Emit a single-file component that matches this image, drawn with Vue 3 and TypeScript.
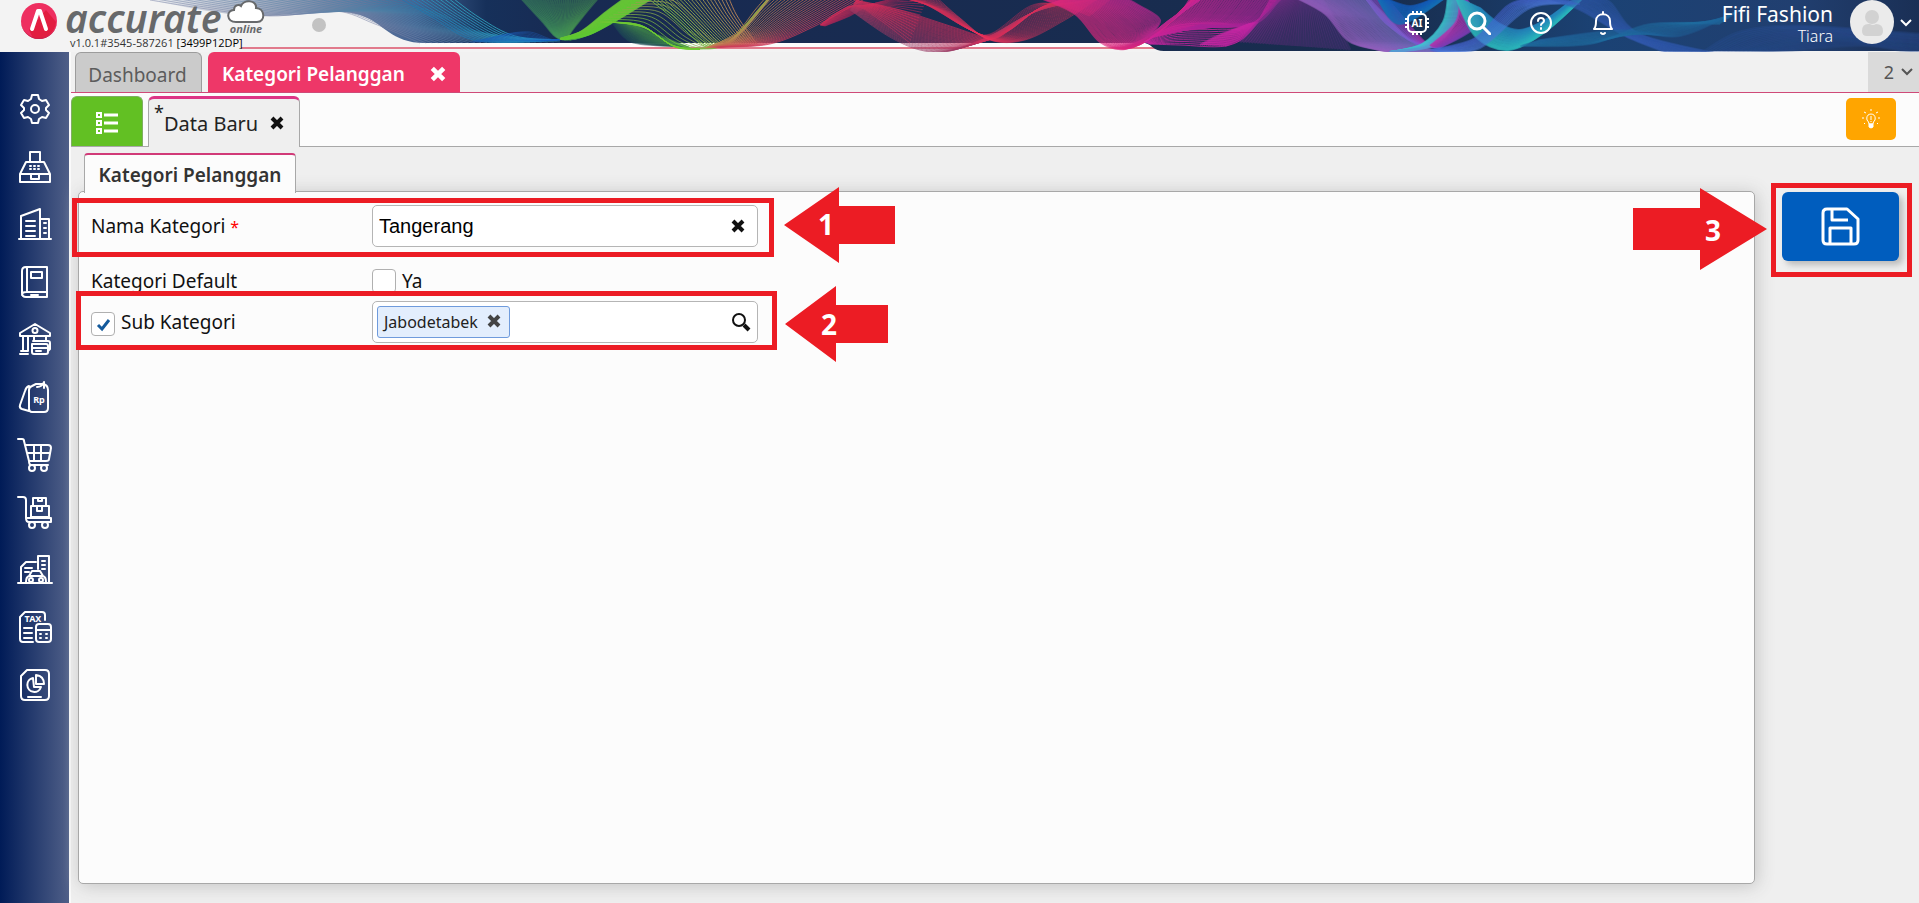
<script setup lang="ts">
import { ref } from 'vue'

type Point = [number, number]

interface Ribbon {
  from: Point[]
  to: Point[]
  lines: number
  start: [number, number, number]
  end: [number, number, number]
  opacity: number
  width: number
}

interface Stroke {
  d: string
  color: string
  opacity: number
  width: number
}

const ribbons: Ribbon[] = [
  { from: [[150, 0], [200, 8], [270, 16], [335, 11], [375, 24], [420, 43]], to: [[330, -16], [370, -8], [400, 2], [440, 14], [480, 32], [560, 42]], lines: 24, start: [122, 132, 166], end: [40, 130, 170], opacity: 0.55, width: 1 },
  { from: [[396, -4], [430, 16], [473, 40], [530, 42]], to: [[450, -4], [480, 18], [515, 36], [560, 40]], lines: 12, start: [30, 120, 175], end: [50, 175, 200], opacity: 0.8, width: 1 },
  { from: [[505, 34], [530, 32], [556, 40], [580, 34]], to: [[470, 42], [500, 41], [540, 41], [575, 38]], lines: 12, start: [30, 95, 190], end: [22, 90, 190], opacity: 0.4, width: 1 },
  { from: [[519, -4], [541, 20], [561, 39], [590, 30], [615, 10], [640, -6]], to: [[600, -4], [585, 14], [568, 38], [590, 34], [620, 18], [656, -4]], lines: 34, start: [65, 150, 90], end: [70, 150, 80], opacity: 0.5, width: 2 },
  { from: [[560, 39], [582, 31], [606, 12], [628, -4]], to: [[566, 39], [590, 34], [620, 18], [655, -4]], lines: 22, start: [104, 197, 55], end: [94, 200, 50], opacity: 0.8, width: 2 },
  { from: [[612, 22], [632, 42], [680, 46]], to: [[630, 23], [655, 34], [690, 48]], lines: 18, start: [30, 75, 85], end: [70, 150, 70], opacity: 0.5, width: 2 },
  { from: [[600, 22], [640, 25], [672, 45], [700, 49], [728, 42], [770, -4]], to: [[640, 0], [674, 1], [704, 28], [724, 45], [744, 30], [772, -4]], lines: 10, start: [111, 192, 60], end: [170, 145, 90], opacity: 0.75, width: 1 },
  { from: [[645, -4], [670, 16], [698, 42], [710, 48]], to: [[728, -4], [736, 14], [748, 32], [757, 44]], lines: 22, start: [115, 188, 64], end: [188, 133, 87], opacity: 0.9, width: 1 },
  { from: [[600, 22], [640, 25], [672, 45], [700, 49]], to: [[615, 22], [645, 28], [675, 47], [700, 49]], lines: 8, start: [110, 200, 50], end: [110, 200, 50], opacity: 0.8, width: 1 },
  { from: [[705, 48], [735, 34], [755, 10], [767, -4]], to: [[720, 47], [770, 44], [815, 26], [870, -4]], lines: 28, start: [190, 135, 80], end: [205, 60, 90], opacity: 0.75, width: 1 },
  { from: [[820, 25], [838, 12], [856, 6], [880, 20], [910, 43]], to: [[825, 26], [850, 16], [870, 5], [900, -3], [930, -10]], lines: 20, start: [225, 45, 90], end: [160, 38, 85], opacity: 0.6, width: 1 },
  { from: [[850, 10], [888, 36], [920, 50], [950, 51], [990, 36], [1040, 10], [1110, -4]], to: [[856, 0], [900, 10], [950, 26], [990, 38], [1010, 30], [1040, 8], [1075, -4]], lines: 34, start: [150, 58, 100], end: [225, 45, 90], opacity: 0.6, width: 1 },
  { from: [[880, -4], [920, 2], [965, 27], [990, 34], [1030, 6], [1058, 5], [1090, 16]], to: [[935, -4], [960, 18], [990, 40], [1025, 40], [1065, 20], [1100, -2], [1120, -8]], lines: 30, start: [200, 45, 88], end: [235, 50, 90], opacity: 0.45, width: 1 },
  { from: [[1035, -4], [1075, 14], [1100, 42], [1125, 49], [1155, 35], [1196, -4]], to: [[1110, -10], [1140, 6], [1160, 20], [1150, 36], [1170, 20], [1205, -4]], lines: 34, start: [220, 40, 125], end: [180, 40, 140], opacity: 0.65, width: 2 },
  { from: [[1144, 42], [1175, 26], [1215, 23], [1250, 24], [1285, -4]], to: [[1150, 44], [1180, 45], [1225, 46], [1250, 32], [1272, -4]], lines: 12, start: [210, 40, 160], end: [200, 36, 160], opacity: 0.8, width: 1 },
  { from: [[1192, -4], [1175, 20], [1150, 38]], to: [[1282, -4], [1254, 24], [1200, 25]], lines: 36, start: [205, 35, 150], end: [165, 35, 150], opacity: 0.7, width: 2 },
  { from: [[1200, 45], [1222, 34], [1250, 24]], to: [[1225, 46], [1243, 38], [1258, 22]], lines: 14, start: [200, 40, 165], end: [190, 35, 160], opacity: 0.6, width: 2 },
  { from: [[1282, -4], [1260, 20], [1240, 42]], to: [[1320, -4], [1335, 20], [1350, 50]], lines: 40, start: [130, 45, 140], end: [90, 50, 130], opacity: 0.35, width: 3 },
  { from: [[1292, -4], [1325, 14], [1350, 42], [1390, 52]], to: [[1366, -4], [1390, 20], [1412, 42], [1440, 52]], lines: 44, start: [150, 95, 190], end: [112, 105, 185], opacity: 0.55, width: 2 },
  { from: [[1364, -4], [1385, 22], [1415, 43], [1440, 48]], to: [[1385, -4], [1400, 14], [1425, 42], [1440, 46]], lines: 10, start: [130, 95, 220], end: [170, 50, 180], opacity: 0.6, width: 2 },
  { from: [[1380, -4], [1410, 6], [1440, -4]], to: [[1376, -4], [1400, 24], [1448, -4]], lines: 20, start: [20, 90, 185], end: [20, 110, 180], opacity: 0.6, width: 2 },
  { from: [[1448, -4], [1443, 22], [1422, 44], [1390, 52]], to: [[1460, -4], [1456, 22], [1432, 46], [1390, 52]], lines: 14, start: [60, 205, 210], end: [90, 150, 210], opacity: 0.6, width: 2 },
  { from: [[1460, -4], [1456, 22], [1430, 46]], to: [[1464, -4], [1478, 24], [1440, 48]], lines: 16, start: [180, 50, 170], end: [125, 60, 180], opacity: 0.65, width: 2 },
  { from: [[1455, -4], [1475, 36], [1508, 50], [1545, 32], [1585, -4]], to: [[1480, 8], [1500, 24], [1520, 30], [1545, 20], [1570, 2]], lines: 32, start: [45, 190, 190], end: [35, 130, 185], opacity: 0.6, width: 2 },
  { from: [[1430, 50], [1475, 38], [1510, 4], [1550, -4]], to: [[1440, 52], [1480, 48], [1530, 8], [1580, 4]], lines: 12, start: [70, 100, 210], end: [75, 120, 215], opacity: 0.45, width: 2 },
  { from: [[1540, -4], [1580, 10], [1625, 36], [1670, 54]], to: [[1590, -4], [1610, 2], [1640, 34], [1720, 54]], lines: 22, start: [55, 95, 185], end: [45, 85, 165], opacity: 0.35, width: 2 },
  { from: [[1520, 46], [1590, 44], [1650, 24], [1720, 24]], to: [[1540, 40], [1620, 30], [1680, 36], [1740, 10]], lines: 20, start: [32, 115, 165], end: [32, 100, 155], opacity: 0.3, width: 2 },
  { from: [[1700, 54], [1740, 32], [1800, 26], [1919, 34]], to: [[1760, 54], [1820, 48], [1870, 46], [1919, 54]], lines: 20, start: [45, 85, 165], end: [40, 75, 140], opacity: 0.2, width: 3 },
]

function smooth(points: Point[]): string {
  let d = `M${points[0][0].toFixed(1)} ${points[0][1].toFixed(1)}`
  for (let i = 0; i < points.length - 1; i++) {
    const p0 = points[Math.max(0, i - 1)]
    const p1 = points[i]
    const p2 = points[i + 1]
    const p3 = points[Math.min(points.length - 1, i + 2)]
    const c = [
      p1[0] + (p2[0] - p0[0]) / 6, p1[1] + (p2[1] - p0[1]) / 6,
      p2[0] - (p3[0] - p1[0]) / 6, p2[1] - (p3[1] - p1[1]) / 6,
      p2[0], p2[1],
    ].map(v => v.toFixed(1))
    d += `C${c.join(' ')}`
  }
  return d
}

const strokes: Stroke[] = ribbons.flatMap(r =>
  Array.from({ length: r.lines }, (_, i) => {
    const t = i / (r.lines - 1)
    const mix = (a: number, b: number) => a + (b - a) * t
    const points = r.from.map((p, k): Point => [mix(p[0], r.to[k][0]), mix(p[1], r.to[k][1])])
    const rgb = r.start.map((c, k) => Math.round(mix(c, r.end[k])))
    return { d: smooth(points), color: `rgb(${rgb.join(',')})`, opacity: r.opacity, width: r.width }
  }),
)

const menu = [
  { name: 'Pengaturan', d: 'M13 2h6l1 4 3 2 4-1 3 5-3 3v2l3 3-3 5-4-1-3 2-1 4h-6l-1-4-3-2-4 1-3-5 3-3v-2l-3-3 3-5 4 1 3-2zM16 12a4 4 0 1 0 0 8a4 4 0 1 0 0-8' },
  { name: 'Kasir', d: 'M11 11V1h10v10M7 11h18l6 12H1zM1 23h30v8H1zM12 24v4h8v-4M11 15h1M15 15h1M19 15h1M11 18h1M15 18h1M19 18h1' },
  { name: 'Perusahaan', d: 'M0 31h32M2 31V8l19-7v30M21 11h9v20M7 13h9M7 18h9M7 23h9M7 28h9M25 15h2M25 20h2M25 25h2' },
  { name: 'Buku Besar', d: 'M7 1h21v30H7q-4 0-4-4V5q0-4 4-4M8 1v25M7 26h21M7 26q-4 0-4 3M12 6h11v6H12zM12 29h7' },
  { name: 'Kas & Bank', d: 'M1 10L16 1l15 9v3H1zM16 5a2 2 0 1 0 0 5a2 2 0 1 0 0-5M4 14v14M9 14v14M1 31h8M2 28h7M15 14v4M27 14v3M14 18h15q2 0 2 2v6l-2 2M13 21h14q2 0 2 2v6q0 2-2 2H15q-2 0-2-2zM13 25h16M17 28h5' },
  { name: 'Penjualan', d: 'M10 9q0-3 3-4l4-2h7q5 1 5 6v18q0 4-4 4H13q-3 0-3-4zM10 5q-3 1-4 5L1 24q-1 3 2 4l7 2M18 6q5 0 7-5M25 1v6', label: 'Rp', lx: 20, ly: 22 },
  { name: 'Keranjang', d: 'M-1 0h4q2 0 2 2l5 20q0 4 2 4h17M6 6h23q3 0 3 3l-2 11q0 2-3 2H10M8 14h23M15 6v16M22 6v16M13 26a3 3 0 1 0 0 6a3 3 0 1 0 0-6M25 26a3 3 0 1 0 0 6a3 3 0 1 0 0-6' },
  { name: 'Persediaan', d: 'M-1 1h5q3 0 3 3v18M14 2h13v8H14zM19 2v3h4V2M12 10h18v11H12zM18 10v5h5v-5M7 22h25v4H10q-3 0-3-4M13 26a3 3 0 1 0 0 6a3 3 0 1 0 0-6M26 26a3 3 0 1 0 0 6a3 3 0 1 0 0-6' },
  { name: 'Aset Tetap', d: 'M-1 29h34M2 29V13l5-5h10M19 15V2h11v27M6 14h7M6 18h4M23 7h3M23 11h3M23 15h3M10 22l3-5h8l3 5q3 1 3 6M10 22q-3 1-3 6M10 22h14M12 24a2 2 0 1 0 0 4a2 2 0 1 0 0-4M22 24a2 2 0 1 0 0 4a2 2 0 1 0 0-4' },
  { name: 'Pajak', d: 'M26 9V4q0-3-3-3H6L1 6v22q0 3 3 3h10M5 17h8M5 22h8M5 27h8M20 13h9q3 0 3 3v12q0 3-3 3h-9q-3 0-3-3V16q0-3 3-3M17 19h15M21 23h1M27 23h1M21 27h1M27 27h1', label: 'TAX', lx: 14, ly: 11 },
  { name: 'Laporan', d: 'M8 1h18q4 0 4 4v22q0 4-4 4H6q-4 0-4-4V7zM14 9a7 7 0 1 0 8 9h-7zM17 6v9h8q0-8-8-9M9 28h13' },
]

const namaKategori = ref('Tangerang')
const kategoriDefault = ref(false)
const subKategori = ref(true)
const induk = ref('')
</script>

<template>
  <div class="app">
    <header class="top">
      <svg class="waves" viewBox="0 0 1919 52" preserveAspectRatio="none" aria-hidden="true">
        <defs>
          <linearGradient id="sky" gradientUnits="userSpaceOnUse" x1="150" y1="0" x2="1919" y2="0">
            <stop offset="0" stop-color="#eef0f3" />
            <stop offset=".05" stop-color="#b4bccb" />
            <stop offset=".1" stop-color="#7986a6" />
            <stop offset=".15" stop-color="#456493" />
            <stop offset=".19" stop-color="#16305a" />
            <stop offset=".24" stop-color="#182a52" />
            <stop offset=".7" stop-color="#182d4e" />
            <stop offset=".82" stop-color="#1b4274" />
            <stop offset=".93" stop-color="#213f70" />
            <stop offset="1" stop-color="#1a2f55" />
          </linearGradient>
        </defs>
        <rect y="42" x="420" width="740" height="5" fill="#fcfcfc" />
        <rect y="47" x="241" width="920" height="2" fill="#e17a8c" />
        <path d="M150 0C190 8 230 17 270 16C300 13 340 8 360 15C385 23 390 43 425 43H1145C1153 45 1153 51 1164 51H1919V0Z" fill="url(#sky)" />
        <path v-for="(s, i) in strokes" :key="i" :d="s.d" fill="none" :stroke="s.color" :stroke-opacity="s.opacity" :stroke-width="s.width" />
      </svg>

      <div class="brand">
        <svg class="mark" viewBox="0 0 38 38" aria-hidden="true">
          <circle cx="19" cy="19" r="18" fill="#ee2f60" />
          <path d="M26 8l10 12A18 18 0 0 1 13 36L9 28z" fill="#e21d40" />
          <path d="M1 19a18 18 0 0 0 36 0a18 17 0 0 1-36 0" fill="#c8234b" />
          <path d="M12 27l6-18h2l6 18" fill="none" stroke="#fff" stroke-width="4" stroke-linejoin="round" stroke-linecap="round" />
        </svg>
        <div class="brand-text">
          <span class="word">accurate</span>
          <span class="version">v1.0.1#3545-587261 <b>[3499P12DP]</b></span>
        </div>
        <div class="cloud">
          <svg viewBox="0 0 38 24" aria-hidden="true">
            <path d="M9 22C-1 22-1 10 7 10C7 5 12 4 14 6C17-1 30 0 29 8C38 8 39 22 30 22Z" fill="#fff" stroke="#67696b" stroke-width="2" />
          </svg>
          <span>online</span>
        </div>
        <i class="dot"></i>
      </div>

      <div class="tools">
        <button type="button" aria-label="AI">
          <svg viewBox="0 0 24 24"><rect x="3" y="3" width="18" height="18" rx="4" /><path d="M8 0v3M12 0v3M16 0v3M8 21v3M12 21v3M16 21v3M0 8h3M0 12h3M0 16h3M21 8h3M21 12h3M21 16h3" /><text x="12" y="16" class="ai">AI</text></svg>
        </button>
        <button type="button" aria-label="Cari">
          <svg viewBox="0 0 24 24" class="bold"><circle cx="10" cy="10" r="8" /><path d="M16 16l7 7" /></svg>
        </button>
        <button type="button" aria-label="Bantuan">
          <svg viewBox="0 0 24 24"><circle cx="12" cy="12" r="10" /><path d="M9 10c0-4 6-4 6 0c0 2-3 2-3 4M12 17v1" /></svg>
        </button>
        <button type="button" aria-label="Notifikasi">
          <svg viewBox="0 0 24 24"><path d="M3 18q2-2 2-8c0-9 14-9 14 0q0 6 2 8zM10 22q2 2 4 0M12 1v2" /></svg>
        </button>
      </div>

      <div class="account">
        <div class="who"><span class="company">Fifi Fashion</span><span class="user">Tiara</span></div>
        <svg class="avatar" viewBox="0 0 45 45" aria-hidden="true"><circle cx="22" cy="22" r="22" fill="#ebebeb" /><circle cx="22" cy="17" r="7" fill="#d2d2d2" /><path d="M12 31q0-8 8-7q3 2 6 0q7 0 7 7q0 5-5 5H17q-5 0-5-5" fill="#d2d2d2" /></svg>
        <svg class="chev" viewBox="0 0 12 8" aria-hidden="true"><path d="M1 1l5 5 5-5" /></svg>
      </div>
    </header>

    <div class="body">
      <nav class="side">
        <button v-for="m in menu" :key="m.name" type="button" :aria-label="m.name">
          <svg viewBox="0 0 32 32"><path :d="m.d" /><text v-if="m.label" :x="m.lx" :y="m.ly">{{ m.label }}</text></svg>
        </button>
      </nav>

      <main class="work">
        <div class="tabs">
          <button type="button" class="tab">Dashboard</button>
          <button type="button" class="tab active">
            <span>Kategori Pelanggan</span>
            <svg class="x" viewBox="0 0 14 14"><path d="M2 2l10 10M12 2L2 12" /></svg>
          </button>
          <button type="button" class="count"><span>2</span><svg class="chev" viewBox="0 0 12 8"><path d="M1 1l5 5 5-5" /></svg></button>
        </div>

        <div class="docs">
          <button type="button" class="list" aria-label="Daftar">
            <svg viewBox="0 0 24 24"><path d="M2 2h4v4H2zM2 10h4v4H2zM2 18h4v4H2z" /><path d="M9 4h14M9 12h14M9 20h14" class="thick" /></svg>
          </button>
          <button type="button" class="doc">
            <sup>*</sup><span>Data Baru</span>
            <svg class="x" viewBox="0 0 14 14"><path d="M2 2l10 10M12 2L2 12" /></svg>
          </button>
          <button type="button" class="hint" aria-label="Petunjuk">
            <svg viewBox="0 0 20 20"><path d="M8 15q0-2-2-4c-2-8 10-8 8 0q-2 2-2 4zM10 7v4M10 12v1M10 0v2M1 9h2M17 9h2M3 3l2 1M17 3l-2 1M3 15l1-1M17 15l-1-1" /><path d="M8 15h4v3q-2 2-4 0z" fill="#fff" /></svg>
          </button>
        </div>

        <div class="page">
          <section class="sheet">
            <button type="button" class="subtab">Kategori Pelanggan</button>
            <form class="panel" @submit.prevent>
              <div class="row">
                <label class="label" for="nama">Nama Kategori <em>*</em></label>
                <div class="field">
                  <input id="nama" v-model="namaKategori" type="text" />
                  <button type="button" aria-label="Hapus" @click="namaKategori = ''"><svg class="x" viewBox="0 0 14 14"><path d="M2 2l10 10M12 2L2 12" /></svg></button>
                </div>
              </div>
              <div class="row short">
                <span class="label">Kategori Default</span>
                <label class="check"><input v-model="kategoriDefault" type="checkbox" />Ya</label>
              </div>
              <div class="row">
                <label class="label check sub"><input v-model="subKategori" type="checkbox" />Sub Kategori</label>
                <div class="field">
                  <span class="chip">Jabodetabek <button type="button" aria-label="Lepas Jabodetabek"><svg class="x" viewBox="0 0 14 14"><path d="M2 2l10 10M12 2L2 12" /></svg></button></span>
                  <input v-model="induk" type="text" aria-label="Kategori induk" />
                  <button type="button" aria-label="Cari kategori"><svg class="lens" viewBox="0 0 20 20"><circle cx="8" cy="8" r="6" /><path d="M13 13l5 5" class="grip" /></svg></button>
                </div>
              </div>

              <div class="frame one"></div>
              <svg class="arrow a1" viewBox="0 0 111 76"><path d="M0 38L55 0v19h56v38H55v19z" /><text x="42" y="48">1</text></svg>
              <div class="frame two"></div>
              <svg class="arrow a2" viewBox="0 0 103 76"><path d="M0 38L51 0v19h52v38H51v19z" /><text x="44" y="49">2</text></svg>
            </form>
          </section>

          <aside class="actions">
            <button type="button" class="save" aria-label="Simpan">
              <svg viewBox="0 0 40 40"><path d="M6 2h20l11 10v21q0 4-4 4H6q-4 0-4-4V6q0-4 4-4zM11 3v10h16M9 37V21h21v16" /></svg>
            </button>
            <div class="frame three"></div>
            <svg class="arrow a3" viewBox="0 0 134 82"><path d="M134 41L67 0v20H0v42h67v20z" /><text x="80" y="53">3</text></svg>
          </aside>
        </div>
      </main>
    </div>
  </div>
</template>

<style>
body { margin: 0; }
</style>

<style scoped>
.app { height: 100vh; display: flex; flex-direction: column; background: #efefef; color: #111; font-family: "Noto Sans", "Open Sans", sans-serif; font-size: 19px; overflow: hidden; }
* { box-sizing: border-box; }
button { border: 0; padding: 0; margin: 0; background: none; font: inherit; color: inherit; display: flex; align-items: center; justify-content: center; }
svg { display: block; flex: none; }
.top { height: 52px; flex: none; position: relative; display: flex; align-items: flex-start; background: #f3f3f3; }
.waves { position: absolute; inset: 0; width: 100%; height: 52px; }
.brand, .tools, .account { position: relative; display: flex; }
.brand { padding-left: 20px; gap: 7px; }
.mark { width: 38px; height: 38px; margin-top: 2px; }
.brand-text { display: flex; flex-direction: column; width: 155px; white-space: nowrap; }
.word { font-weight: 600; font-style: italic; font-size: 39px; line-height: 36px; color: #67696b; }
.version { font-family: "Open Sans", sans-serif; font-size: 11px; line-height: 13px; margin-left: 5px; color: #333; }
.version b { font-weight: 400; color: #000; }
.cloud { width: 38px; display: flex; flex-direction: column; align-items: center; }
.cloud svg { width: 38px; height: 24px; }
.cloud span { font-size: 11px; line-height: 10px; font-weight: 700; font-style: italic; color: #67696b; }
.dot { width: 14px; height: 14px; border-radius: 50%; background: #c2c2c2; margin: 18px 0 0 40px; }
.tools { margin-left: auto; gap: 38px; padding-top: 11px; }
.tools svg { width: 24px; height: 24px; fill: none; stroke: #fff; stroke-width: 2; stroke-linecap: round; stroke-linejoin: round; }
.tools .bold { stroke-width: 3; }
.ai { font-size: 10px; font-weight: 700; fill: #fff; stroke: none; text-anchor: middle; }
.account { align-items: center; margin-left: 107px; padding-right: 7px; color: #fff; }
.who { display: flex; flex-direction: column; align-items: flex-end; margin-right: 17px; }
.company { font-size: 21px; line-height: 26px; margin-top: 1px; }
.user { font-size: 16px; line-height: 18px; font-weight: 300; }
.avatar { width: 45px; height: 45px; margin-right: 5px; }
.chev { width: 12px; height: 8px; fill: none; stroke: currentColor; stroke-width: 2; }

.body { flex: 1; min-height: 0; display: flex; }
.side { width: 69px; flex: none; padding-top: 41px; padding-bottom: 202px; display: flex; flex-direction: column; align-items: center; justify-content: space-between; background: linear-gradient(90deg, #001b57, #4f5f88); }
.side svg { width: 32px; height: 32px; fill: none; stroke: #fff; stroke-width: 2; stroke-linejoin: round; stroke-linecap: round; overflow: visible; }
.side text { fill: #fff; stroke: none; font-size: 9px; font-weight: 700; text-anchor: middle; }
.work { flex: 1; min-width: 0; display: flex; flex-direction: column; border-left: 2px solid #fafafa; }

.tabs { height: 41px; flex: none; display: flex; gap: 6px; padding-left: 4px; border-bottom: 1px solid #cf4a78; background: #f1f1f1; }
.tab { height: 40px; padding: 4px 14px 0 12px; border: 1px solid #9c9c9c; border-bottom: 0; border-radius: 6px 6px 0 0; background: #cbcbcb; color: #5c5c5c; width: 127px; }
.tab.active { width: 252px; padding-left: 14px; border: 0; background: #ee3768; color: #fff; font-weight: 600; justify-content: space-between; }
.x { width: 14px; height: 14px; fill: none; stroke: currentColor; stroke-width: 4; }
.tab .x { width: 16px; height: 16px; }
.count { margin-left: auto; width: 51px; gap: 7px; background: #dadada; color: #555; font-size: 18px; padding-left: 10px; }

.docs { height: 54px; flex: none; display: flex; align-items: flex-end; background: #fcfcfc; border-bottom: 1px solid #a8a8a8; }
.list { width: 72px; height: 50px; background: #62c023; border: 1px solid #7fae62; border-bottom: 0; border-radius: 6px 6px 0 0; }
.list svg { width: 24px; height: 24px; margin-top: 2px; fill: none; stroke: #fff; stroke-width: 2; }
.list .thick { stroke-width: 3; }
.doc { width: 152px; height: 51px; margin: 0 0 -1px 5px; padding-left: 5px; justify-content: flex-start; border: 1px solid #a8a8a8; border-top: 3px solid #dc3586; border-bottom: 0; border-radius: 6px 6px 0 0; background: #efefef; color: #222; font-size: 20px; }
.doc sup { align-self: flex-start; font-size: 18px; line-height: 26px; }
.doc .x { margin-left: 12px; color: #111; }
.hint { width: 50px; height: 42px; margin: 0 23px 6px auto; border-radius: 5px; background: #ffa500; }
.hint svg { width: 20px; height: 20px; fill: none; stroke: #fff; stroke-width: 1; }

.page { flex: 1; min-height: 0; display: flex; padding: 6px 7px 19px 7px; }
.sheet { flex: 1; display: flex; flex-direction: column; align-items: flex-start; }
.subtab { height: 40px; width: 212px; margin-left: 6px; margin-bottom: -2px; padding-top: 2px; position: relative; z-index: 1; border: 1px solid #a8a8a8; border-top: 2px solid #d13a78; border-bottom: 0; border-radius: 4px 4px 0 0; background: #fcfcfc; color: #333; font-weight: 600; }
.panel { position: relative; flex: 1; align-self: stretch; border: 1px solid #a8a8a8; border-radius: 5px; background: #fcfcfc; box-shadow: 2px 2px 18px #c4c4c4; padding: 13px 12px; }
.row { display: flex; align-items: center; height: 42px; }
.row.short { height: 24px; margin: 22px 0 8px; }
.label { width: 281px; flex: none; }
.label em { color: #f00; font-style: normal; font-size: 16px; }
.check { display: flex; align-items: center; gap: 6px; }
.check input { appearance: none; width: 24px; height: 24px; margin: 0; border: 1px solid #b0b0b0; border-radius: 4px; background: #fff; flex: none; }
.check input:checked { background: #fff url("data:image/svg+xml,%3Csvg xmlns='http://www.w3.org/2000/svg' viewBox='0 0 22 22'%3E%3Cpath d='M6 12l4 4 7-9' fill='none' stroke='%23145a9c' stroke-width='3'/%3E%3C/svg%3E") center / 22px; }
.sub input { margin-top: 4px; }
.field { width: 386px; height: 42px; display: flex; align-items: center; padding: 0 12px 0 4px; border: 1px solid #b5b5b5; border-radius: 5px; background: #fff; }
.field input { flex: 1; min-width: 0; border: 0; outline: 0; padding: 0 2px; background: none; font: 20px "Liberation Sans", Arial, sans-serif; color: #000; }
.lens { width: 20px; height: 20px; fill: none; stroke: #111; stroke-width: 2; margin-right: -6px; }
.grip { stroke-width: 4; }
.chip { height: 32px; display: flex; align-items: center; gap: 9px; padding: 0 8px 0 6px; border: 1px solid #6f9bdc; border-radius: 3px; background: #e3eefd; font-size: 16px; color: #222; }
.chip .x { color: #444; margin-bottom: 3px; }

.actions { position: relative; width: 157px; flex: none; padding: 39px 13px 0 27px; }
.save { width: 100%; height: 69px; border-radius: 6px; background: #005dbe; box-shadow: 4px 4px 6px #bbb; }
.save svg { width: 40px; height: 40px; fill: none; stroke: #fff; stroke-width: 3; stroke-linejoin: round; }

.frame { position: absolute; border: 5px solid #ec1c24; pointer-events: none; }
.one { left: -7px; top: 6px; width: 702px; height: 59px; }
.two { left: -3px; top: 99px; width: 701px; height: 59px; }
.three { left: 16px; top: 30px; width: 141px; height: 94px; }
.arrow { position: absolute; fill: #ec1c24; pointer-events: none; }
.arrow text { fill: #fff; font-size: 28px; font-weight: 700; text-anchor: middle; }
.a1 { left: 705px; top: -5px; width: 111px; height: 76px; }
.a2 { left: 706px; top: 94px; width: 103px; height: 76px; }
.a3 { left: -122px; top: 35px; width: 134px; height: 82px; }
</style>
